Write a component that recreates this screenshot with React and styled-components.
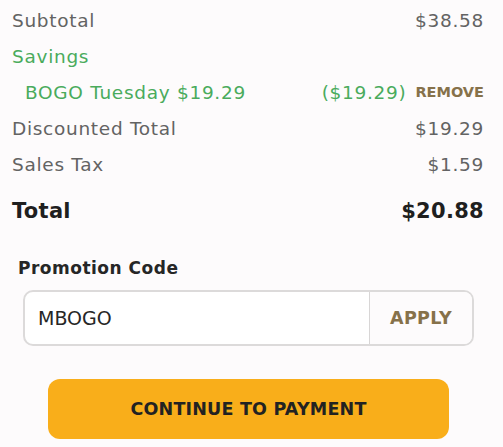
import React from 'react';
import styled, {createGlobalStyle} from 'styled-components';

const GlobalStyle = createGlobalStyle`
    body {
        margin: 0;
        background: #fdfbfc;
        font-family: "DejaVu Sans", "Noto Sans", sans-serif;
    }
`;

const Page = styled.div`
    width: 503px;
`;

const Summary = styled.div`
    padding: 2px 19px 0 12px;
`;

const Row = styled.div`
    display: flex;
    justify-content: space-between;
    align-items: center;
    height: 36px;
    font-size: 18.5px;
    letter-spacing: 0.7px;
    color: ${props => props.green ? '#4aab5c' : '#636363'};
    padding-left: ${props => props.indent ? '13px' : '0'};
`;

const TotalRow = styled(Row)`
    height: 38px;
    margin-top: 10px;
    font-size: 21px;
    letter-spacing: 0.3px;
    font-weight: bold;
    color: #1f1f1f;
`;

const RightGroup = styled.div`
    display: flex;
    align-items: center;
    gap: 9px;
`;

const RemoveLink = styled.button`
    border: none;
    background: none;
    padding: 0;
    font-family: inherit;
    font-size: 14.5px;
    font-weight: bold;
    color: #86714a;
    cursor: pointer;
`;

const PromoSection = styled.div`
    padding: 27px 29px 0 18px;
`;

const PromoLabel = styled.div`
    font-size: 17px;
    letter-spacing: 0.5px;
    font-weight: bold;
    color: #262626;
    line-height: 22px;
`;

const PromoBox = styled.div`
    display: flex;
    margin: 11px 0 0 5px;
    height: 56px;
    box-sizing: border-box;
    border: 2px solid #dcdada;
    border-radius: 10px;
    background: #fff;
    overflow: hidden;
`;

const PromoInput = styled.input`
    flex: 1;
    min-width: 0;
    border: none;
    outline: none;
    padding: 0 13px;
    font-family: inherit;
    font-size: 19px;
    color: #262626;
    background: transparent;
`;

const ApplyButton = styled.button`
    width: 103px;
    border: none;
    border-left: 1px solid #d8d6d6;
    background: #fdfbfc;
    font-family: inherit;
    font-size: 17.5px;
    letter-spacing: 0.3px;
    font-weight: bold;
    color: #86714a;
    cursor: pointer;
`;

const PayButton = styled.button`
    display: block;
    width: 401px;
    height: 60px;
    margin: 33px 0 0 48px;
    border: none;
    border-radius: 12px;
    background: #f9ae1a;
    font-family: inherit;
    font-size: 17.5px;
    letter-spacing: 0.2px;
    font-weight: bold;
    color: #222;
    cursor: pointer;
`;

export default function App() {
    return (
        <Page>
            <GlobalStyle/>
            <Summary>
                <Row><span>Subtotal</span><span>$38.58</span></Row>
                <Row green><span>Savings</span></Row>
                <Row green indent>
                    <span>BOGO Tuesday $19.29</span>
                    <RightGroup>
                        <span>($19.29)</span>
                        <RemoveLink>REMOVE</RemoveLink>
                    </RightGroup>
                </Row>
                <Row><span>Discounted Total</span><span>$19.29</span></Row>
                <Row><span>Sales Tax</span><span>$1.59</span></Row>
                <TotalRow><span>Total</span><span>$20.88</span></TotalRow>
            </Summary>
            <PromoSection>
                <PromoLabel>Promotion Code</PromoLabel>
                <PromoBox>
                    <PromoInput defaultValue="MBOGO"/>
                    <ApplyButton>APPLY</ApplyButton>
                </PromoBox>
            </PromoSection>
            <PayButton>CONTINUE TO PAYMENT</PayButton>
        </Page>
    );
}
